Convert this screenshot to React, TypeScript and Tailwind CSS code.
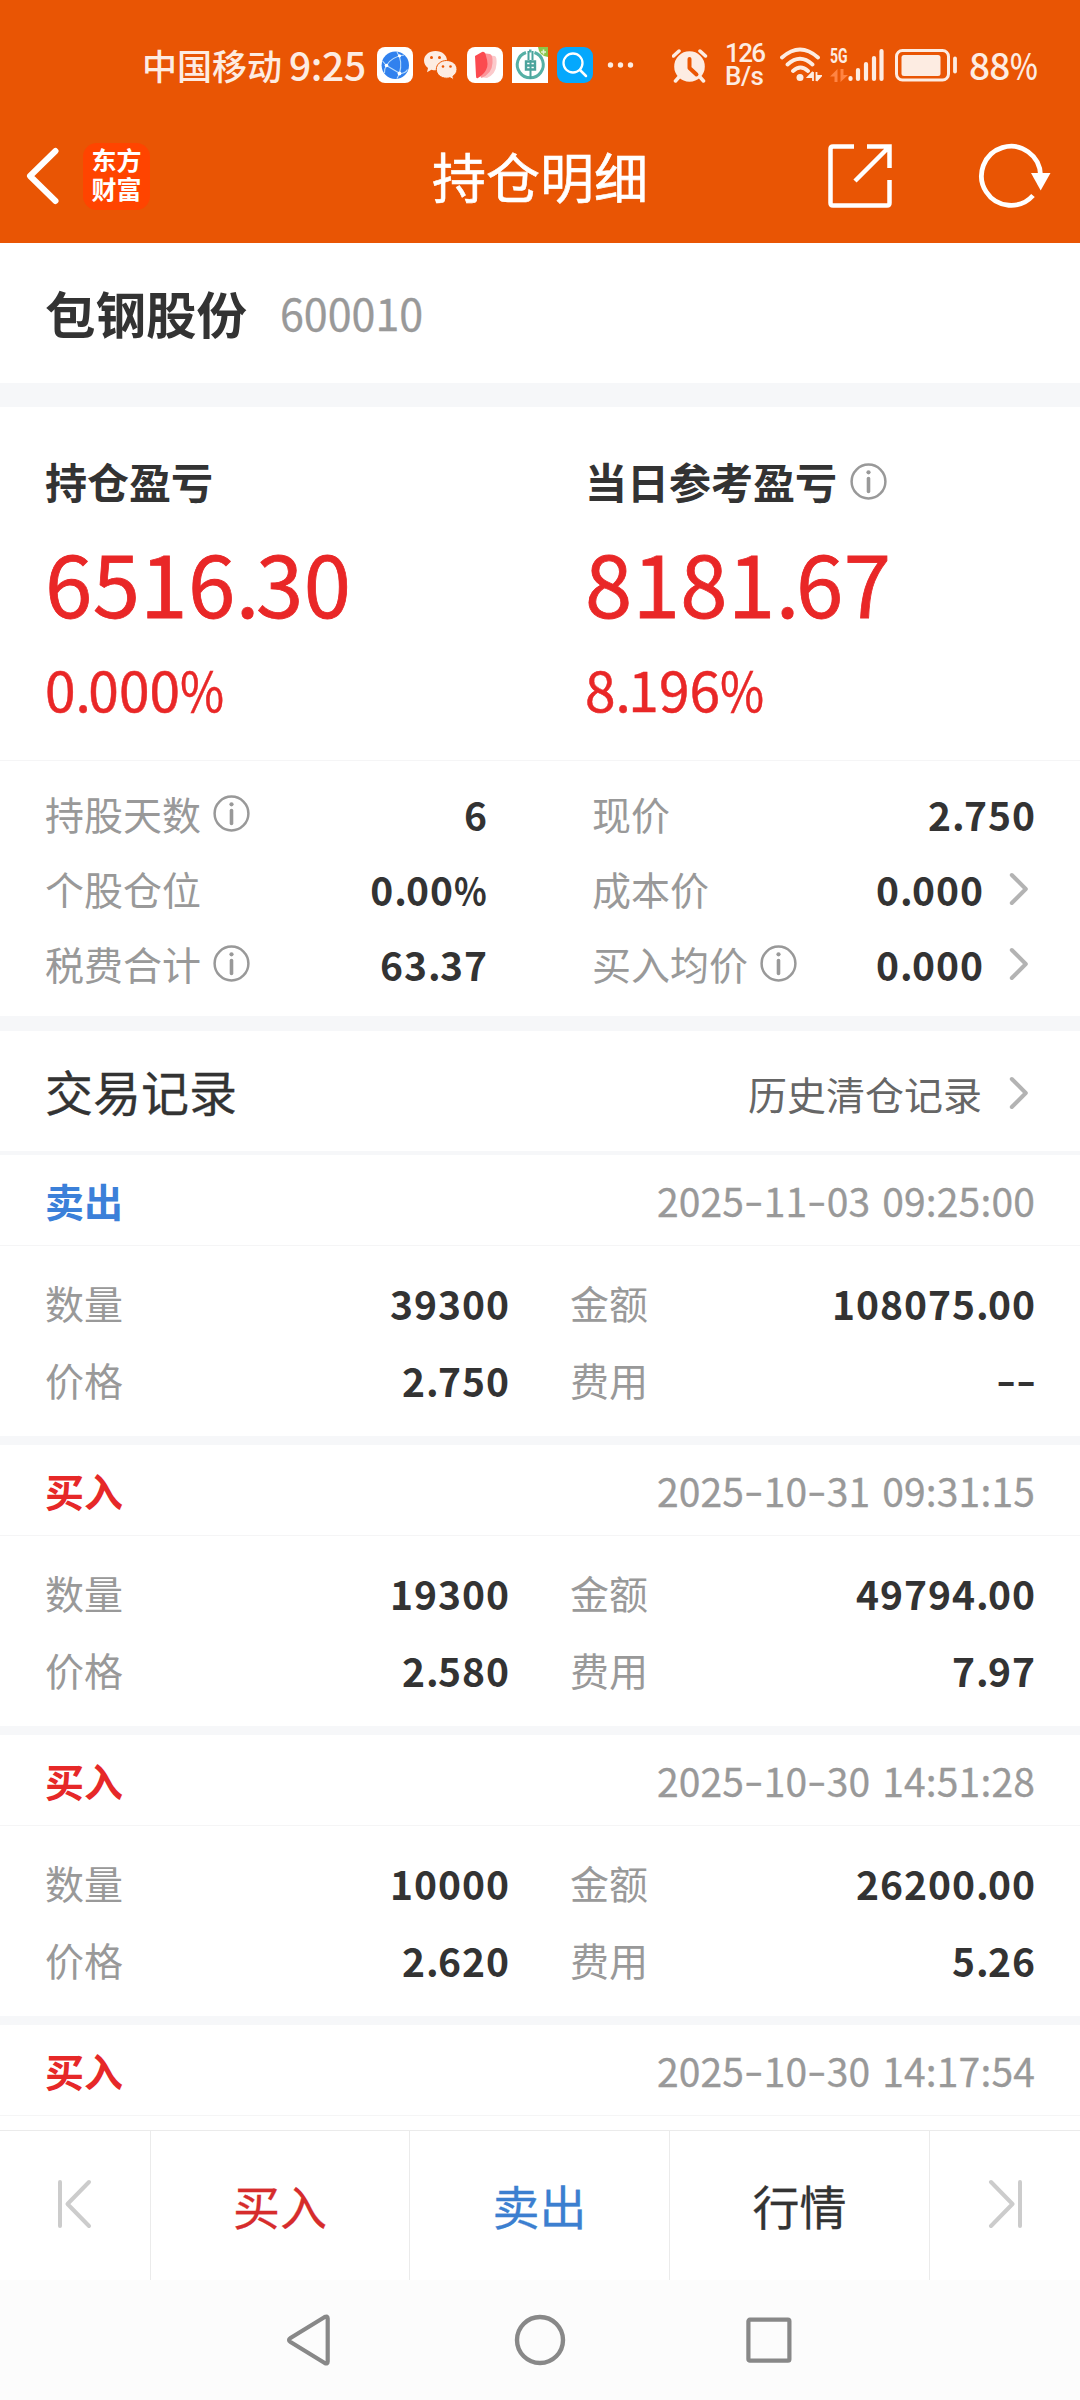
import React from "react";

const InfoIcon = () => (
  <svg className="h-[37px] w-[37px] shrink-0" viewBox="0 0 37 37" fill="none">
    <circle cx="18.5" cy="18.5" r="16.9" stroke="#999" strokeWidth="2.5" />
    <circle cx="18.5" cy="9.3" r="2.1" fill="#999" />
    <path d="M18.5 15.5v13" stroke="#999" strokeWidth="3.6" strokeLinecap="round" />
  </svg>
);

const Chevron = () => (
  <svg className="h-9 w-5 shrink-0" viewBox="0 0 20 36" fill="none">
    <path d="M2.8 4l14 14-14 14" stroke="#b3b3b3" strokeWidth="4" strokeLinecap="round" strokeLinejoin="round" />
  </svg>
);

/* Numeric text with a tight decimal point, a narrow percent sign and wide hyphens. */
function Num({ text }: { text: string }) {
  return (
    <>
      {text.split(/([.%-])/).map((part, i) => {
        if (part === ".") return <span key={i} className="mr-[-0.045em]">.</span>;
        if (part === "%") return <span key={i} className="mr-[-0.12em] inline-block origin-left scale-x-[0.87]">%</span>;
        if (part === "-") return (
          <span key={i} className="inline-block w-[0.5em] -translate-y-[2px] scale-x-[1.4] text-center">-</span>
        );
        return part;
      })}
    </>
  );
}

function StatusBar() {
  return (
    <div className="flex h-[110px] items-center pt-5 pl-[142px] text-[#fdece2]">
      <span className="-mt-[2px] w-[147px] text-[35px] leading-none font-medium whitespace-nowrap">中国移动</span>
      <span className="-mt-[2px] w-[88px] text-[39px] leading-none font-medium tracking-[-0.400px] whitespace-nowrap">9:25</span>
      <div className="flex gap-[9px]">
        <svg className="h-9 w-9" viewBox="0 0 36 36" fill="none">
          <rect width="36" height="36" rx="8" fill="#fff" />
          <circle cx="18.300" cy="18.300" r="13.700" fill="#3181ee" />
          <g stroke="#b9dcfb" strokeWidth="1.100">
            <path d="M5.500 14l4 4.500L23 26.500M9.500 18.500Q14 10 27 8M20 5q6 9 2.500 21.500L20 31.500M9.500 18.500Q7 22 7.500 26M22.500 26.500q6 0 8-4" />
          </g>
          <circle cx="9.500" cy="18.500" r="1.800" fill="#fff" />
          <circle cx="22.500" cy="8.800" r="1.600" fill="#fff" />
          <circle cx="22.500" cy="26.500" r="1.900" fill="#fff" />
        </svg>
        <svg className="h-9 w-9" viewBox="0 0 36 36">
          <path d="M13.500 4C7 4 2 8.200 2 13.600c0 3 1.600 5.600 4 7.400L5 25.200l4.400-2.500c1.300.4 2.700.6 4.100.6 6.400 0 11.500-4.300 11.500-9.700S20 4 13.500 4z" fill="#fdece2" />
          <path d="M24.600 13.500c-5.800 0-10.300 3.900-10.300 8.800 0 5 4.500 8.900 10.300 8.900 1.200 0 2.300-.2 3.400-.5l3.800 2.100-.9-3.500c2.600-1.700 4.100-4.200 4.100-7 0-4.900-4.600-8.800-10.400-8.800z" fill="#fdece2" stroke="#eb5602" strokeWidth="1" />
          <g fill="#eb5602">
            <circle cx="9.500" cy="10.500" r="1.500" /><circle cx="17.500" cy="10.500" r="1.500" />
            <circle cx="21" cy="19.500" r="1.300" /><circle cx="28.500" cy="19.500" r="1.300" />
          </g>
        </svg>
        <svg className="h-9 w-9" viewBox="0 0 36 36">
          <rect width="36" height="36" rx="8" fill="#fff" />
          <path d="M18 8l10 1q2 1 1.500 8Q29 27 20 31l-8-1z" fill="#fbc9cb" />
          <path d="M15 6l8 1q3 1 2.500 9Q25 27 14 31z" fill="#fc9398" />
          <path d="M8 9l7-4q3-1 4 4 3 9 0 14-2 4-8 8-2 1-2-2z" fill="#fb4a50" />
        </svg>
        <svg className="h-9 w-9" viewBox="0 0 36 36" fill="none">
          <path d="M0 0h36v36H0z" fill="#fff" />
          <path d="M26 0h10v10q-9-1-10-10z" fill="#8ac64a" />
          <path d="M31.500 2.500v5M29 5h5" stroke="#e2f3cf" strokeWidth="1.600" />
          <path d="M14 5.500A13 13 0 1022.500 5.500M17 4h2.500" stroke="#56b0a5" strokeWidth="3" />
          <path d="M18.500 13v19M16.500 4v9M20.500 4v9" stroke="#4ba39c" strokeWidth="2" />
          <path d="M14 14.500h9v8h-9zM14 18.500h9" stroke="#4ba39c" strokeWidth="2.400" />
        </svg>
        <svg className="h-9 w-9" viewBox="0 0 36 36" fill="none">
          <rect width="36" height="36" rx="9" fill="#05a8fd" />
          <circle cx="16" cy="16" r="9.500" stroke="#fff" strokeWidth="2.300" />
          <path d="M23 23l6 6" stroke="#fff" strokeWidth="2.500" strokeLinecap="round" />
        </svg>
        <svg className="h-9 w-9" viewBox="0 0 36 36" fill="#fdece2">
          <circle cx="8.500" cy="18" r="2.700" /><circle cx="18.500" cy="18" r="2.700" /><circle cx="28.500" cy="18" r="2.700" />
        </svg>
      </div>
      <svg className="ml-[34px] h-9 w-9" viewBox="0 0 36 36" fill="none">
        <circle cx="17.500" cy="19.500" r="15.300" fill="#fdece2" />
        <path d="M1.500 9L7 4M33.500 9L28 4M7 30l-3.500 4M28 30l3.500 4" stroke="#fdece2" strokeWidth="3.500" strokeLinecap="round" />
        <path d="M17.500 12v9l7 6.500" stroke="#eb5602" strokeWidth="4" strokeLinecap="round" strokeLinejoin="round" />
      </svg>
      <div className="ml-[17px] w-[56px] text-[26px] leading-[23px] font-medium" style={{ fontFamily: "Roboto, 'Noto Sans', sans-serif" }}>
        <div className="tracking-[-1.600px] whitespace-nowrap">126</div>
        <div className="tracking-[-0.500px] whitespace-nowrap">B/s</div>
      </div>
      <svg className="-ml-[1px] h-10 w-[42px]" viewBox="0 0 42 40" fill="none">
        <path d="M2 12.500q18-16 36 0M7.500 19.500q12.500-11.500 25 0M13 26q7.500-7 15 0" stroke="#fdece2" strokeWidth="3.800" strokeLinecap="round" />
        <circle cx="20" cy="32.500" r="3.500" fill="#fdece2" />
        <path d="M33 27v9M33 27l-5 5h5M36.500 36v-9M36.500 36l4.500-5h-4.500" stroke="#fdece2" strokeWidth="1.800" fill="#fdece2" />
      </svg>
      <div className="ml-2 flex h-9 w-[18px] flex-col justify-between pb-[1px]">
        <span className="origin-left scale-x-[0.7] text-[20px] leading-[18px] font-bold" style={{ fontFamily: "Roboto, sans-serif" }}>5G</span>
        <svg className="h-[13px] w-[18px]" viewBox="0 0 18 13" fill="#ff8443">
          <path d="M0 7.500L7.500 0v13H4.500V7.500zM10.500 0h3v6H18L10.500 13z" />
        </svg>
      </div>
      <svg className="h-9 w-9" viewBox="0 0 36 36" stroke="#fdece2" strokeWidth="4.200" strokeLinecap="round">
        <path d="M2.500 32v-1M10 32v-9M18 32V17M26 32v-21M33.500 32V4" />
      </svg>
      <svg className="ml-[11px] h-9 w-16" viewBox="0 0 64 36" fill="none">
        <rect x="1.500" y="3.500" width="52" height="29.500" rx="6" stroke="#fdece2" strokeWidth="3" />
        <rect x="6.500" y="8" width="39" height="21" rx="2.500" fill="#fdece2" />
        <path d="M60 11.500v13" stroke="#fdece2" strokeWidth="3.800" strokeLinecap="round" />
      </svg>
      <span className="-mt-px ml-[10px] text-[37px] leading-none font-medium tracking-[-0.800px]">
        88<span className="inline-block origin-left scale-x-[0.8]">%</span>
      </span>
    </div>
  );
}

function TitleBar() {
  return (
    <div className="flex h-[133px] items-center">
      <svg className="-mt-[2px] ml-[26px] h-[60px] w-[34px]" viewBox="0 0 34 60" fill="none">
        <path d="M29.500 5L4 30l25.500 25" stroke="#fff" strokeWidth="6" strokeLinecap="round" strokeLinejoin="round" />
      </svg>
      <div className="-mt-px ml-[23px] grid h-[67px] w-[67px] place-content-center rounded-[14px] bg-[#ff4400] pb-1 text-[25px] leading-[29px] font-bold text-white">
        <span>东方</span>
        <span>财富</span>
      </div>
      <h1 className="-mt-[2px] ml-[282px] text-[54px] leading-none text-white [-webkit-text-stroke:0.6px]">持仓明细</h1>
      <svg className="-mt-[2px] ml-[180px] h-[64px] w-[64px]" viewBox="0 0 64 64" fill="none" stroke="#fff" strokeWidth="4.500">
        <path d="M26 2.500H5Q2.500 2.500 2.500 5v54q0 2.500 2.500 2.500h54q2.500 0 2.500-2.500V36M39 2.500h22.500V24M27 37L60 4" />
      </svg>
      <svg className="-mt-[2px] ml-[86px] h-[66px] w-[74px]" viewBox="0 0 74 66" fill="none">
        <path d="M62.500 32A29.500 29.500 0 1055 52.500" stroke="#fff" strokeWidth="4.800" />
        <path d="M53 30h19.500L62.700 47.500z" fill="#fff" />
      </svg>
    </div>
  );
}

function Profit({ label, value, percent, info }: { label: string; value: string; percent: string; info?: boolean }) {
  return (
    <div className="w-[540px] shrink-0 text-[#e92727]">
      <div className="flex h-[42px] items-center gap-[13px] text-[#333]">
        <span className="text-[42px] leading-none font-bold">{label}</span>
        {info && <InfoIcon />}
      </div>
      <div className="mt-[36px] text-[85px] leading-none tracking-[0.500px] [-webkit-text-stroke:0.8px]"><Num text={value} /></div>
      <div className="mt-[38px] text-[55px] leading-none [-webkit-text-stroke:0.5px]"><Num text={percent} /></div>
    </div>
  );
}

const Value = ({ text }: { text: string }) => (
  <span className="mt-[2px] mr-[-1px] text-[39px] leading-none font-bold tracking-[1px] text-[#333]"><Num text={text} /></span>
);

function Stat({ label, value, info, arrow }: { label: string; value: string; info?: boolean; arrow?: boolean }) {
  return (
    <div className="flex h-[75px] items-center">
      <span className="text-[39px] leading-none text-[#999]">{label}</span>
      {info && <span className="ml-[12px]"><InfoIcon /></span>}
      <span className="ml-auto flex"><Value text={value} /></span>
      {arrow && <span className="mr-[6px] ml-[26px]"><Chevron /></span>}
    </div>
  );
}

function Pair({ label, value }: { label: string; value: string }) {
  return (
    <div className="flex h-[77px] items-center justify-between">
      <span className="text-[39px] leading-none text-[#999]">{label}</span>
      <Value text={value} />
    </div>
  );
}

type Trade = { sell?: boolean; time: string; qty?: string; price?: string; amount?: string; fee?: string };

const trades: Trade[] = [
  { sell: true, time: "2025-11-03 09:25:00", qty: "39300", price: "2.750", amount: "108075.00", fee: "--" },
  { time: "2025-10-31 09:31:15", qty: "19300", price: "2.580", amount: "49794.00", fee: "7.97" },
  { time: "2025-10-30 14:51:28", qty: "10000", price: "2.620", amount: "26200.00", fee: "5.26" },
  { time: "2025-10-30 14:17:54" },
];

function Record({ t }: { t: Trade }) {
  return (
    <div>
      <div className="flex h-[91px] items-center justify-between border-b border-[#f5f5f6] pr-[45px] pl-[45px]">
        <span className={t.sell ? "text-[39px] leading-none font-bold text-[#3b80d9]" : "text-[39px] leading-none font-bold text-[#e62828]"}>
          {t.sell ? "卖出" : "买入"}
        </span>
        <span className="text-[39px] leading-none tracking-[0.150px] text-[#999] [word-spacing:3px] [-webkit-text-stroke:0.3px]"><Num text={t.time} /></span>
      </div>
      {t.qty && (
        <>
          <div className="flex h-[190px] pt-[18px] pl-[45px]">
            <div className="w-[464px]">
              <Pair label="数量" value={t.qty} />
              <Pair label="价格" value={t.price!} />
            </div>
            <div className="ml-[61px] w-[465px]">
              <Pair label="金额" value={t.amount!} />
              <Pair label="费用" value={t.fee!} />
            </div>
          </div>
          <div className="h-[9px] bg-[#f6f7f9]" />
        </>
      )}
    </div>
  );
}

function BottomBar() {
  return (
    <div className="flex h-[150px] border-t border-[#ebebeb] bg-white text-[47px] leading-none [-webkit-text-stroke:0.3px]">
      <div className="flex w-[151px] justify-center border-r border-[#ebebeb] pt-[47px]">
        <svg className="h-[52px] w-[36px]" viewBox="0 0 36 52" fill="none" stroke="#ccc" strokeWidth="4" strokeLinecap="round" strokeLinejoin="round">
          <path d="M3 4v44M32 4L10.500 26 32 48" />
        </svg>
      </div>
      <div className="flex w-[259px] justify-center border-r border-[#ebebeb] pt-[50px] text-[#d62c2c]">买入</div>
      <div className="flex w-[260px] justify-center border-r border-[#ebebeb] pt-[50px] text-[#3c7fd0]">卖出</div>
      <div className="flex w-[260px] justify-center border-r border-[#ebebeb] pt-[50px] text-[#333]">行情</div>
      <div className="flex w-[150px] justify-center pt-[47px]">
        <svg className="h-[52px] w-[36px]" viewBox="0 0 36 52" fill="none" stroke="#ccc" strokeWidth="4" strokeLinecap="round" strokeLinejoin="round">
          <path d="M33 4v44M4 4l21.500 22L4 48" />
        </svg>
      </div>
    </div>
  );
}

function SystemNav() {
  return (
    <div className="flex h-[120px] items-center bg-[#fcfcfc] pl-[284px]">
      <svg className="h-[56px] w-[48px]" viewBox="0 0 48 56" fill="none">
        <path d="M43.700 6.500v43q0 3-3 1.500L6.500 30q-3-2 0-4l34.200-21q3-1.500 3 1.500z" stroke="#888" strokeWidth="4.200" />
      </svg>
      <svg className="ml-[180px] h-[56px] w-[56px]" viewBox="0 0 56 56" fill="none">
        <circle cx="28" cy="28" r="23" stroke="#888" strokeWidth="4.400" />
      </svg>
      <svg className="ml-[176px] h-[50px] w-[50px]" viewBox="0 0 50 50" fill="none">
        <rect x="4.400" y="4.700" width="41" height="41" rx="1.500" stroke="#888" strokeWidth="4.200" />
      </svg>
    </div>
  );
}

export default function App() {
  return (
    <div
      lang="zh-CN"
      className="flex h-[2400px] w-[1080px] flex-col overflow-hidden bg-white"
      style={{ fontFamily: "'Noto Sans CJK SC', sans-serif" }}
    >
      <header className="h-[243px] shrink-0 bg-[#e95504]">
        <StatusBar />
        <TitleBar />
      </header>
      <main className="h-[1887px] shrink-0 overflow-hidden bg-white">
        <section className="flex h-[140px] items-center pb-[2px] pl-[45px]">
          <span className="text-[50.500px] leading-none font-bold text-[#333]">包钢股份</span>
          <span className="ml-[33px] text-[43px] leading-none text-[#999] [-webkit-text-stroke:0.3px]">600010</span>
        </section>
        <div className="h-6 bg-[#f6f7f9]" />
        <section className="flex h-[354px] border-b border-[#f5f5f6] pt-[53px] pl-[45px]">
          <Profit label="持仓盈亏" value="6516.30" percent="0.000%" />
          <Profit label="当日参考盈亏" value="8181.67" percent="8.196%" info />
        </section>
        <section className="flex h-[255px] pt-[15px] pl-[45px]">
          <div className="w-[442px]">
            <Stat label="持股天数" value="6" info />
            <Stat label="个股仓位" value="0.00%" />
            <Stat label="税费合计" value="63.37" info />
          </div>
          <div className="ml-[105px] w-[443px]">
            <Stat label="现价" value="2.750" />
            <Stat label="成本价" value="0.000" arrow />
            <Stat label="买入均价" value="0.000" info arrow />
          </div>
        </section>
        <div className="h-[15px] bg-[#f6f7f9]" />
        <section className="flex h-[120px] items-center justify-between pr-[51px] pl-[45px]">
          <h2 className="-mt-[3px] text-[48px] leading-none text-[#333] [-webkit-text-stroke:0.3px]">交易记录</h2>
          <div className="mt-[4px] flex items-center">
            <span className="text-[39px] leading-none text-[#666]">历史清仓记录</span>
            <span className="ml-[27px]"><Chevron /></span>
          </div>
        </section>
        <div className="h-1 bg-[#f6f7f9]" />
        {trades.map((t) => (
          <Record key={t.time} t={t} />
        ))}
      </main>
      <BottomBar />
      <SystemNav />
    </div>
  );
}
